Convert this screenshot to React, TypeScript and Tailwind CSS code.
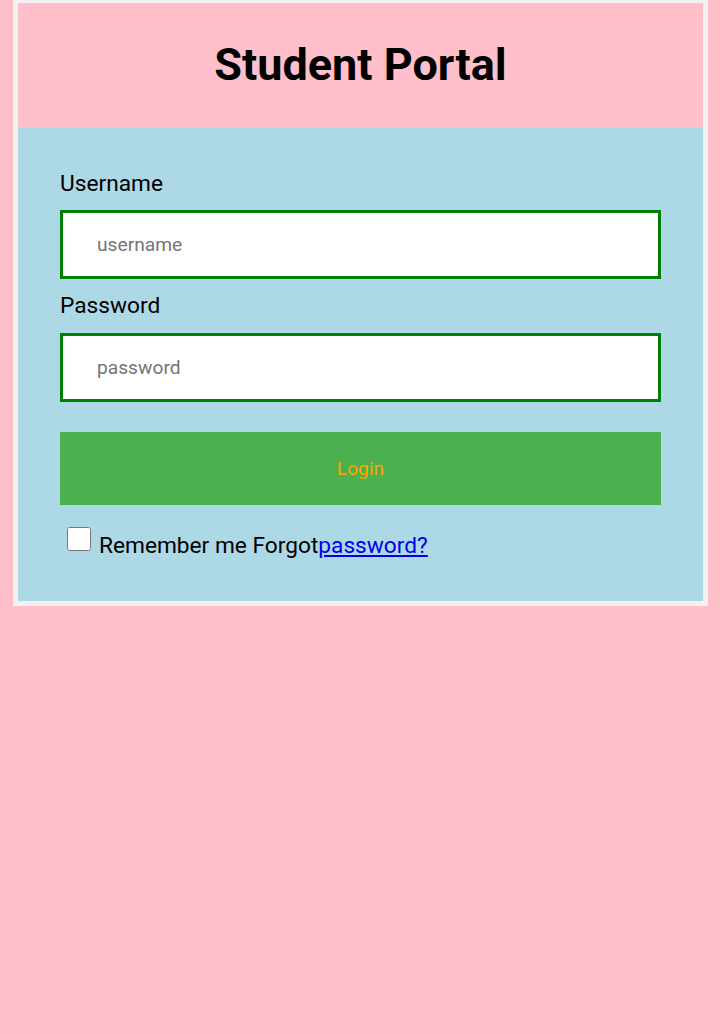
import { useState } from "react";

const App = () => {
  const [remember, setRemember] = useState(false);

  return (
    <div className="min-h-[1034px] bg-[#ffc0cb] font-['Roboto',sans-serif] pt-0">
      <div className="ml-[13px] w-[695px] border-[5px] border-t-[3px] border-[#f2f2f2]">
        <div className="h-[125px] flex items-center justify-center pb-[3px]">
          <h1 className="text-[45px] font-bold text-black leading-none">Student Portal</h1>
        </div>
        <form
          className="bg-[#add8e6] px-[42px] pt-[43px] pb-[42px] flex flex-col"
          onSubmit={(e) => e.preventDefault()}
        >
          <label className="text-[22.7px] leading-[26px] text-black">Username</label>
          <input
            type="text"
            placeholder="username"
            className="mt-[13px] h-[69px] w-full bg-white border-[3px] border-[#008000] pl-[34px] text-[19.2px] outline-none placeholder:text-[#757575]"
          />
          <label className="mt-[14px] text-[22.7px] leading-[26px] text-black">Password</label>
          <input
            type="password"
            placeholder="password"
            className="mt-[14px] h-[69px] w-full bg-white border-[3px] border-[#008000] pl-[34px] text-[19.2px] outline-none placeholder:text-[#757575]"
          />
          <button
            type="submit"
            className="mt-[30px] h-[73px] w-full bg-[#4caf50] text-[#ffa500] text-[19.2px] pt-[2px]"
          >
            Login
          </button>
          <div className="mt-[22px] flex items-start text-[22.7px] leading-[26px] text-black">
            <input
              type="checkbox"
              checked={remember}
              onChange={() => setRemember(!remember)}
              className="ml-[7px] mr-[8px] w-[24px] h-[24px]"
            />
            <span className="mt-[6px]">
              Remember me Forgot<a href="#" className="text-[#0000ee] underline">password?</a>
            </span>
          </div>
        </form>
      </div>
    </div>
  );
};

export default App;
